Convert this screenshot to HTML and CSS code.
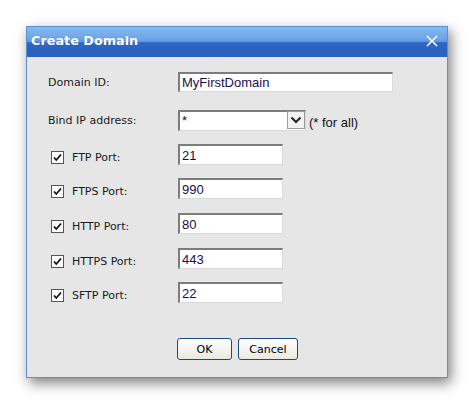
FILE: index.html
```html
<!DOCTYPE html>
<html>
<head>
<meta charset="utf-8">
<link rel="stylesheet" href="styles.css">
</head>
<body>
<div class="dialog">
  <div class="titlebar">
    <span class="title">Create Domain</span>
    <svg class="close" width="12" height="12" viewBox="0 0 12 12"><path d="M1 1L11 11M11 1L1 11" stroke="#fff" stroke-width="1.6" fill="none"/></svg>
  </div>
  <div class="content">
    <div class="row row-domain">
      <label class="label">Domain ID:</label>
      <input class="field wide" type="text" value="MyFirstDomain">
    </div>
    <div class="row row-bind">
      <label class="label">Bind IP address:</label>
      <div class="select-wrap">
        <div class="select">
          <span class="select-text">*</span>
          <span class="select-btn"><svg width="12" height="8" viewBox="0 0 12 8"><path d="M1.5 1.5L6 6L10.5 1.5" stroke="#222" stroke-width="2" fill="none"/></svg></span>
        </div>
        <span class="hint">(* for all)</span>
      </div>
    </div>
    <div class="row port first">
      <span class="check-area"><span class="cb"><svg width="11" height="11" viewBox="0 0 11 11"><path d="M2 5.5L4.3 8L9 2.5" stroke="#111" stroke-width="1.8" fill="none"/></svg></span><label class="plabel">FTP Port:</label></span>
      <input class="field port-in" type="text" value="21">
    </div>
    <div class="row port g13">
      <span class="check-area"><span class="cb"><svg width="11" height="11" viewBox="0 0 11 11"><path d="M2 5.5L4.3 8L9 2.5" stroke="#111" stroke-width="1.8" fill="none"/></svg></span><label class="plabel">FTPS Port:</label></span>
      <input class="field port-in" type="text" value="990">
    </div>
    <div class="row port g14">
      <span class="check-area"><span class="cb"><svg width="11" height="11" viewBox="0 0 11 11"><path d="M2 5.5L4.3 8L9 2.5" stroke="#111" stroke-width="1.8" fill="none"/></svg></span><label class="plabel">HTTP Port:</label></span>
      <input class="field port-in" type="text" value="80">
    </div>
    <div class="row port g14">
      <span class="check-area"><span class="cb"><svg width="11" height="11" viewBox="0 0 11 11"><path d="M2 5.5L4.3 8L9 2.5" stroke="#111" stroke-width="1.8" fill="none"/></svg></span><label class="plabel">HTTPS Port:</label></span>
      <input class="field port-in" type="text" value="443">
    </div>
    <div class="row port g13">
      <span class="check-area"><span class="cb"><svg width="11" height="11" viewBox="0 0 11 11"><path d="M2 5.5L4.3 8L9 2.5" stroke="#111" stroke-width="1.8" fill="none"/></svg></span><label class="plabel">SFTP Port:</label></span>
      <input class="field port-in" type="text" value="22">
    </div>
    <div class="buttons">
      <button class="btn ok">OK</button>
      <button class="btn cancel">Cancel</button>
    </div>
  </div>
</div>
</body>
</html>
```
FILE: styles.css
```css
html, body {
  margin: 0;
  padding: 0;
  background: #fff;
}
body {
  width: 474px;
  height: 404px;
  overflow: hidden;
}
.dialog {
  margin: 26px 0 0 26px;
  width: 420px;
  height: 350px;
  border: 1px solid #5f8fd3;
  background: #e6e6e6;
  box-shadow: 3px 5px 12px rgba(0, 0, 0, 0.5);
  display: flex;
  flex-direction: column;
}
.titlebar {
  height: 30px;
  flex: none;
  background: linear-gradient(#86baf0 0%, #6ca4e8 40%, #5b94de 50%, #2e66c4 52%, #2a60bd 100%);
  display: flex;
  align-items: center;
  justify-content: space-between;
  padding: 0 9px 0 4px;
}
.title {
  font-family: "DejaVu Sans", Verdana, sans-serif;
  font-weight: bold;
  font-size: 12.8px;
  color: #fff;
  margin-top: -3px;
  text-shadow: 0 0 1px rgba(20, 50, 120, 0.4);
}
.close {
  display: block;
  margin-top: -3px;
}
.content {
  display: flex;
  flex-direction: column;
  padding-top: 15px;
}
.row {
  display: flex;
  align-items: center;
}
.label {
  width: 130px;
  padding-left: 21px;
  font-family: "DejaVu Sans", Verdana, sans-serif;
  font-size: 11px;
  color: #1a1a1a;
}
.field {
  box-sizing: border-box;
  margin: 0;
  padding: 0 2px;
  background: #fff;
  border-top: 2px solid #7c7c7c;
  border-left: 2px solid #7c7c7c;
  border-right: 1px solid #d9d9d9;
  border-bottom: 1px solid #d9d9d9;
  font-family: "Liberation Sans", Arial, sans-serif;
  font-size: 13px;
  color: #1b0d4d;
  outline: none;
}
.wide {
  width: 215px;
  height: 20px;
}
.row-bind {
  margin-top: 18px;
}
.select-wrap {
  display: flex;
  align-items: flex-end;
}
.select {
  box-sizing: border-box;
  width: 128px;
  height: 21px;
  display: flex;
  background: #fff;
  border-top: 2px solid #7c7c7c;
  border-left: 2px solid #7c7c7c;
  border-right: 1px solid #d9d9d9;
  border-bottom: 1px solid #d9d9d9;
}
.select-text {
  flex: 1;
  padding-left: 2px;
  font-family: "Liberation Sans", Arial, sans-serif;
  font-size: 13px;
  color: #1b0d4d;
  line-height: 17px;
}
.select-btn {
  box-sizing: border-box;
  width: 18px;
  height: 18px;
  margin-top: -1px;
  background: #f2f2f2;
  border: 1px solid #9a9a9a;
  display: flex;
  align-items: center;
  justify-content: center;
}
.hint {
  margin-left: 3px;
  font-family: "Liberation Sans", Arial, sans-serif;
  font-size: 13px;
  color: #111;
  line-height: 15px;
  margin-bottom: 1px;
}
.port.first {
  margin-top: 13px;
}
.port.g13 {
  margin-top: 13px;
}
.port.g14 {
  margin-top: 14px;
}
.check-area {
  width: 151px;
  display: flex;
  align-items: center;
  padding-top: 5px;
}
.cb {
  box-sizing: border-box;
  width: 13px;
  height: 13px;
  margin-left: 24px;
  border: 1px solid #555;
  background: #fff;
  display: flex;
  align-items: center;
  justify-content: center;
}
.cb svg {
  display: block;
}
.plabel {
  margin-left: 8px;
  font-family: "DejaVu Sans", Verdana, sans-serif;
  font-size: 11px;
  color: #1a1a1a;
}
.port-in {
  width: 105px;
  height: 21px;
}
.buttons {
  display: flex;
  justify-content: center;
  gap: 6px;
  margin-top: 35px;
  padding-left: 1px;
}
.btn {
  box-sizing: border-box;
  height: 22px;
  margin: 0;
  padding: 0;
  border: 1px solid #1d4a7e;
  border-radius: 3px;
  background: linear-gradient(#fefefd, #f3f2ee 60%, #e9e8e2);
  font-family: "DejaVu Sans", Verdana, sans-serif;
  font-size: 11px;
  color: #000;
}
.ok {
  width: 55px;
}
.cancel {
  width: 60px;
}
```
